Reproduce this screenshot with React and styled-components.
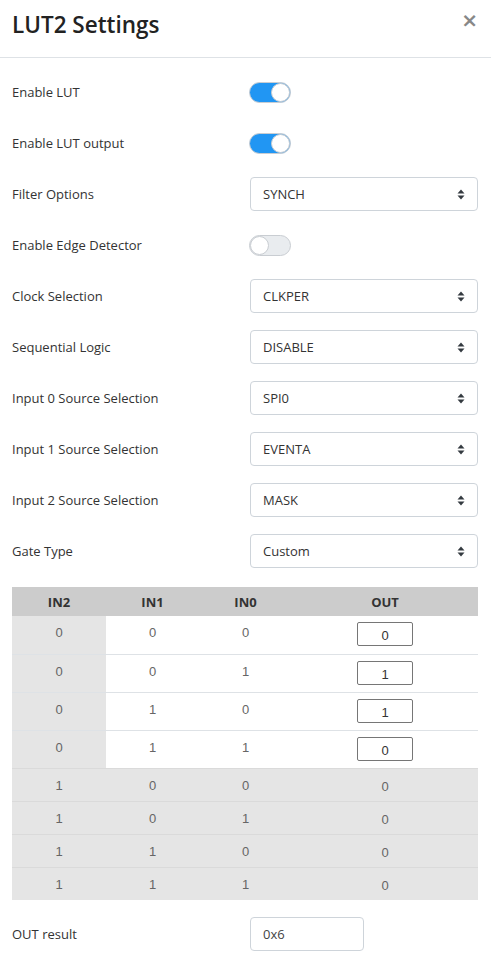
import React from "react";
import styled, { createGlobalStyle } from "styled-components";

const Global = createGlobalStyle`
  html, body { margin: 0; padding: 0; background: #fff; }
  body { font-family: "Open Sans", "Noto Sans", sans-serif; color: #333; }
  * { box-sizing: border-box; }
`;

const Page = styled.div`
  width: 491px;
  background: #fff;
`;

const Header = styled.div`
  height: 58px;
  border-bottom: 1px solid #dee2e6;
  display: flex;
  align-items: flex-start;
  justify-content: space-between;
  padding: 8px 16px 0 12px;
`;

const Title = styled.h1`
  margin: 0;
  font-size: 22.5px;
  font-weight: 600;
  color: #222;
  line-height: 34px;
`;

const Close = styled.span`
  font-family: "DejaVu Sans", sans-serif;
  font-size: 20px;
  line-height: 24px;
  color: #888;
  font-weight: 700;
  margin-right: -3px;
`;

const Body = styled.div`
  padding: 17px 13px 20px 12px;
  display: flex;
  flex-direction: column;
`;

const Rows = styled.div`
  display: grid;
  grid-template-columns: 238px 228px;
  row-gap: 17px;
  align-items: center;
`;

const Label = styled.div`
  font-size: 13px;
  color: #333;
  height: 34px;
  display: flex;
  align-items: center;
`;

const SwitchTrack = styled.div`
  width: 42px;
  height: 21px;
  border-radius: 11px;
  border: 1px solid #c9cdd2;
  background: ${(p) => (p.$on ? "#2196f3" : "#e9ecef")};
  display: flex;
  justify-content: ${(p) => (p.$on ? "flex-end" : "flex-start")};
  margin-left: -1px;
`;

const Knob = styled.div`
  width: 19px;
  height: 19px;
  border-radius: 50%;
  background: #fff;
  border: 1px solid #c9cdd2;
`;

const SelectBox = styled.div`
  height: 34px;
  border: 1px solid #ced4da;
  border-radius: 4px;
  display: flex;
  align-items: center;
  justify-content: space-between;
  padding: 0 12px 0 12px;
  font-size: 13px;
  color: #333;
`;

const Arrows = styled.svg`
  width: 8px;
  height: 11px;
`;

const Table = styled.table`
  margin-top: 19px;
  width: 466px;
  border-collapse: collapse;
  table-layout: fixed;
`;

const Th = styled.th`
  background: #ccc;
  height: 29px;
  font-size: 13px;
  font-weight: 700;
  color: #333;
  text-align: center;
  padding: 0;
`;

const Tr = styled.tr`
  background: ${(p) => (p.$gray ? "#e5e5e5" : "#fff")};
  border-top: 1px solid ${(p) => (p.$gray ? "#dadada" : "#dee2e6")};
  &:first-child { border-top: none; }
`;

const Td = styled.td`
  font-family: "Liberation Sans", Arial, sans-serif;
  font-size: 13px;
  color: #666;
  text-align: center;
  height: ${(p) => (p.$tall ? "38px" : "33px")};
  padding: 0 0 ${(p) => (p.$tall ? "3px" : "0")};
  padding-top: ${(p) => (p.$tall ? "9px" : "1px")};
  background: ${(p) => (p.$shade ? "#e5e5e5" : "transparent")};
  vertical-align: ${(p) => (p.$tall ? "top" : "middle")};
`;

const TdOut = styled(Td)`
  padding-top: ${(p) => (p.$tall ? "6px" : "3px")};
`;

const OutInput = styled.div`
  width: 56px;
  height: 24px;
  margin: 0 auto;
  border: 1px solid #767676;
  border-radius: 2px;
  font-family: "Liberation Sans", Arial, sans-serif;
  font-size: 13px;
  color: #333;
  display: flex;
  align-items: center;
  justify-content: center;
  padding-top: 3px;
`;

const ResultRow = styled.div`
  margin-top: 17px;
  display: grid;
  grid-template-columns: 238px 114px;
  align-items: center;
`;

const ResultBox = styled.div`
  height: 34px;
  border: 1px solid #ced4da;
  border-radius: 4px;
  display: flex;
  align-items: center;
  padding: 0 12px;
  font-size: 13px;
  color: #444;
`;

function Switch({ on }) {
  return (
    <SwitchTrack $on={on}>
      <Knob />
    </SwitchTrack>
  );
}

function Select({ value }) {
  return (
    <SelectBox>
      <span>{value}</span>
      <Arrows viewBox="0 0 8 11">
        <path d="M4 0.5 L7.5 4.5 L0.5 4.5 Z" fill="#343a40" />
        <path d="M4 10.5 L7.5 6.5 L0.5 6.5 Z" fill="#343a40" />
      </Arrows>
    </SelectBox>
  );
}

const settings = [
  ["Enable LUT", { switch: true }],
  ["Enable LUT output", { switch: true }],
  ["Filter Options", { select: "SYNCH" }],
  ["Enable Edge Detector", { switch: false }],
  ["Clock Selection", { select: "CLKPER" }],
  ["Sequential Logic", { select: "DISABLE" }],
  ["Input 0 Source Selection", { select: "SPI0" }],
  ["Input 1 Source Selection", { select: "EVENTA" }],
  ["Input 2 Source Selection", { select: "MASK" }],
  ["Gate Type", { select: "Custom" }],
];

const truth = [
  [0, 0, 0, 0],
  [0, 0, 1, 1],
  [0, 1, 0, 1],
  [0, 1, 1, 0],
  [1, 0, 0, 0],
  [1, 0, 1, 0],
  [1, 1, 0, 0],
  [1, 1, 1, 0],
];

export default function App() {
  return (
    <Page>
      <Global />
      <Header>
        <Title>LUT2 Settings</Title>
        <Close>×</Close>
      </Header>
      <Body>
        <Rows>
          {settings.map(([label, ctl]) => (
            <React.Fragment key={label}>
              <Label>{label}</Label>
              {"switch" in ctl ? (
                <Switch on={ctl.switch} />
              ) : (
                <Select value={ctl.select} />
              )}
            </React.Fragment>
          ))}
        </Rows>
        <Table>
          <colgroup>
            <col style={{ width: "94px" }} />
            <col style={{ width: "93px" }} />
            <col style={{ width: "93px" }} />
            <col style={{ width: "186px" }} />
          </colgroup>
          <thead>
            <tr>
              <Th>IN2</Th>
              <Th>IN1</Th>
              <Th>IN0</Th>
              <Th>OUT</Th>
            </tr>
          </thead>
          <tbody>
            {truth.map((r, i) => {
              const editable = r[0] === 0;
              return (
                <Tr key={i} $gray={!editable}>
                  <Td $tall={editable} $shade>{r[0]}</Td>
                  <Td $tall={editable}>{r[1]}</Td>
                  <Td $tall={editable}>{r[2]}</Td>
                  <TdOut $tall={editable}>
                    {editable ? <OutInput>{r[3]}</OutInput> : r[3]}
                  </TdOut>
                </Tr>
              );
            })}
          </tbody>
        </Table>
        <ResultRow>
          <Label>OUT result</Label>
          <ResultBox>0x6</ResultBox>
        </ResultRow>
      </Body>
    </Page>
  );
}
